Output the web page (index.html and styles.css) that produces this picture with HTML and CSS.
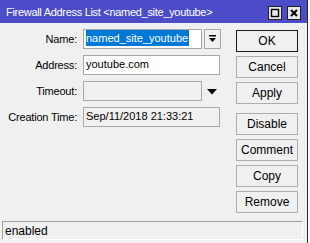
FILE: index.html
```html
<!DOCTYPE html>
<html lang="en">
<head>
  <meta charset="UTF-8" />
  <title>Firewall Address List</title>
  <link rel="stylesheet" href="styles.css">
</head>
<body>

  <div class="window">
    <div class="titlebar">
      <span class="title">Firewall Address List &lt;named_site_youtube&gt;</span>
      <span class="title-btn">
        <svg width="12" height="12" viewBox="0 0 12 12"><rect x="2.5" y="2.5" width="7" height="7" fill="none" stroke="#000" stroke-width="1.4"/></svg>
      </span>
      <span class="title-btn">
        <svg width="12" height="12" viewBox="0 0 12 12"><path d="M3 3 L9 9 M9 3 L3 9" stroke="#000" stroke-width="2"/></svg>
      </span>
    </div>

    <div class="content">
      <div class="form">
        <div class="row">
          <label>Name:</label>
          <div class="field name-field"><span class="selected">named_site_youtube</span></div>
          <span class="drop-btn">
            <svg width="9" height="8" viewBox="0 0 9 8"><rect x="1" y="0" width="7" height="1.5" fill="#000"/><path d="M1 3 L8 3 L4.5 7 Z" fill="#000"/></svg>
          </span>
        </div>
        <div class="row">
          <label>Address:</label>
          <div class="field wide">youtube.com</div>
        </div>
        <div class="row">
          <label>Timeout:</label>
          <div class="field disabled"></div>
          <span class="drop-arrow">
            <svg width="10" height="6" viewBox="0 0 10 6"><path d="M0 0 L10 0 L5 5.5 Z" fill="#000"/></svg>
          </span>
        </div>
        <div class="row">
          <label>Creation Time:</label>
          <div class="field wide disabled">Sep/11/2018 21:33:21</div>
        </div>
      </div>

      <div class="buttons">
        <button class="default">OK</button>
        <button>Cancel</button>
        <button>Apply</button>
        <button class="spaced">Disable</button>
        <button>Comment</button>
        <button>Copy</button>
        <button>Remove</button>
      </div>
    </div>

    <div class="status">enabled</div>
  </div>

</body>
</html>
```

FILE: styles.css
```css
body {
  margin: 0;
  background: #ffffff;
  font-family: "Liberation Sans", Arial, sans-serif;
  font-size: 11px;
  color: #000;
}
.window {
  width: 307px;
  height: 243px;
  background: #f0f0f0;
  border-right: 1px solid #2a2a2a;
  display: flex;
  flex-direction: column;
}
.titlebar {
  height: 23px;
  background: #4c4cc8;
  color: #fff;
  display: flex;
  align-items: center;
  padding: 0 6px 0 6px;
  gap: 5px;
}
.title {
  flex: 1;
  font-size: 11px;
  letter-spacing: -0.3px;
  padding-top: 1px;
}
.title-btn {
  width: 12px;
  height: 12px;
  background: #e8e8e8;
  border: 1px solid #202020;
  display: flex;
  margin-top: 2px;
}
.content {
  flex: 1;
  display: flex;
}
.form {
  width: 236px;
  padding-top: 6px;
  display: flex;
  flex-direction: column;
  gap: 6px;
}
.row {
  display: flex;
  align-items: center;
  height: 20px;
}
.row label {
  width: 77px;
  margin-right: 6px;
  text-align: right;
  white-space: nowrap;
  letter-spacing: -0.2px;
}
.field {
  box-sizing: border-box;
  height: 20px;
  width: 119px;
  background: #fff;
  border: 1px solid #a8a8a8;
  padding: 2px 0 0 2px;
  white-space: nowrap;
  overflow: hidden;
}
.field.wide {
  width: 137px;
}
.field.disabled {
  background: #f0f0f0;
}
.name-field {
  width: 119px;
}
.selected {
  background: #0078d7;
  color: #fff;
  padding: 2px 1px 2px 0;
}
.drop-btn {
  box-sizing: border-box;
  width: 17px;
  height: 20px;
  margin-left: 2px;
  border: 1px solid #a8a8a8;
  display: flex;
  align-items: center;
  justify-content: center;
}
.drop-arrow {
  margin-left: 5px;
  display: flex;
  margin-top: 2px;
}
.buttons {
  padding-top: 7px;
  display: flex;
  flex-direction: column;
  gap: 4px;
}
.buttons button {
  box-sizing: border-box;
  width: 62px;
  height: 22px;
  background: #f0f0f0;
  border: 1px solid #adadad;
  font-family: inherit;
  font-size: 12px;
  color: #000;
  padding: 0;
}
.buttons button.default {
  border: 1px solid #1a1a1a;
}
.buttons button.spaced {
  margin-top: 5px;
}
.status {
  box-sizing: border-box;
  height: 19px;
  margin: 0 4px 3px 2px;
  border-top: 1px solid #a0a0a0;
  border-left: 1px solid #a0a0a0;
  border-right: 1px solid #fff;
  border-bottom: 1px solid #fff;
  padding: 2px 0 0 2px;
  font-size: 12px;
}
```
